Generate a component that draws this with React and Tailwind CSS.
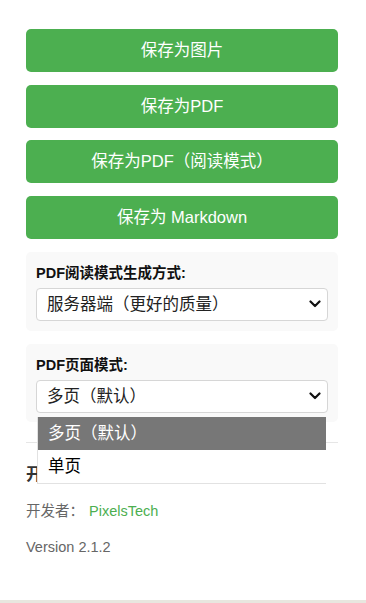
import { useState } from "react";

const font = { fontFamily: '"Liberation Sans", "Noto Sans CJK SC", sans-serif' };

function Chevron() {
    return (
        <svg width="12" height="8" viewBox="0 0 12 8" className="absolute right-[6px] top-1/2 -translate-y-1/2">
            <path d="M1.5 1.5 L6 6 L10.5 1.5" fill="none" stroke="#111" strokeWidth="2.2" strokeLinecap="round" strokeLinejoin="round" />
        </svg>
    );
}

function SelectBox({ value }) {
    return (
        <div className="relative h-[33px] w-full rounded-[4px] border border-[#d6d6d6] bg-white pl-[10px] flex items-center text-[16.5px] text-[#222]">
            <span>{value}</span>
            <Chevron />
        </div>
    );
}

export default function App() {
    const [picked] = useState("多页（默认）");
    const buttons = ["保存为图片", "保存为PDF", "保存为PDF（阅读模式）", "保存为 Markdown"];

    return (
        <div className="relative w-[366px] h-[603px] bg-white overflow-hidden" style={font}>
            <div className="ml-[26px] w-[312px] pt-[29px]">
                <div className="flex flex-col gap-[12.5px]">
                    {buttons.map((b) => (
                        <button key={b} className="h-[43px] w-full rounded-[5px] bg-[#4caf50] text-white text-[16.5px]">
                            {b}
                        </button>
                    ))}
                </div>

                <div className="mt-[13px] rounded-[5px] bg-[#f9f9f9] px-[10px] pt-[11px] pb-[10px]">
                    <div className="text-[14.5px] font-bold text-[#111] leading-[20px]">PDF阅读模式生成方式:</div>
                    <div className="mt-[5px]">
                        <SelectBox value="服务器端（更好的质量）" />
                    </div>
                </div>

                <div className="mt-[13px] rounded-[5px] bg-[#f9f9f9] px-[10px] pt-[11px] pb-[9px]">
                    <div className="text-[14.5px] font-bold text-[#111] leading-[20px]">PDF页面模式:</div>
                    <div className="relative mt-[5px]">
                        <SelectBox value={picked} />
                        {/* open dropdown list, lies over the section below */}
                        <div className="absolute left-[1px] top-[37px] w-[289px] z-10 border-l border-b border-[#e2e2e2] bg-white">
                            <div className="h-[33px] bg-[#777777] text-white text-[16.5px] pl-[10px] flex items-center">多页（默认）</div>
                            <div className="h-[33px] bg-white text-black text-[16.5px] pl-[10px] flex items-center">单页</div>
                        </div>
                    </div>
                </div>

                <div className="mt-[20px] border-t border-[#e6e6e6]"></div>

                <div className="mt-[20px] text-[16.5px] font-bold text-[#333] leading-[22px]">开发者信息</div>
                <div className="mt-[16px] text-[14.5px] text-[#666] leading-[20px]">
                    开发者： <span className="ml-[1px] text-[#4caf50]">PixelsTech</span>
                </div>
                <div className="mt-[16px] text-[14.5px] text-[#666] leading-[20px]">Version 2.1.2</div>
            </div>
            <div className="absolute left-0 bottom-0 w-full h-[3px] bg-[#e8e6df]"></div>
        </div>
    );
}
